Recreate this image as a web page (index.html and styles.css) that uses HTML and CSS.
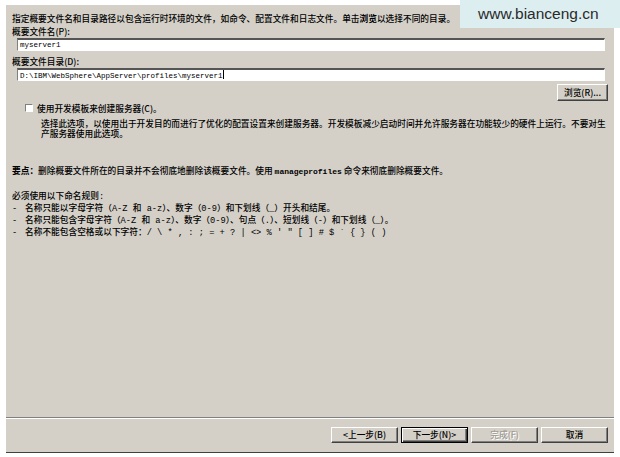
FILE: index.html
```html
<!DOCTYPE html>
<html>
<head>
  <meta charset="utf-8">
  <title>概要文件名和位置</title>
  <link rel="stylesheet" href="styles.css">
</head>
<body>
  <div class="dialog">
    <div class="content">
      <p class="intro">指定概要文件名和目录路径以包含运行时环境的文件，如命令、配置文件和日志文件。单击<b>浏览</b>以选择不同的目录。</p>

      <div class="field-label">概要文件名(P):</div>
      <div class="textbox">myserver1</div>

      <div class="field-label gap">概要文件目录(D):</div>
      <div class="textbox">D:\IBM\WebSphere\AppServer\profiles\myserver1<span class="caret"></span></div>

      <div class="browse-row">
        <button class="btn browse">浏览(R)...</button>
      </div>

      <div class="check-row">
        <span class="checkbox"></span>
        <span>使用开发模板来创建服务器(C)。</span>
      </div>
      <p class="check-desc">选择此选项，以使用出于开发目的而进行了优化的配置设置来创建服务器。开发模板减少启动时间并允许服务器在功能较少的硬件上运行。不要对生<br>产服务器使用此选项。</p>

      <p class="note"><b>要点：</b>删除概要文件所在的目录并不会彻底地删除该概要文件。使用 <code>manageprofiles</code> 命令来彻底删除概要文件。</p>

      <div class="rules">
        <p>必须使用以下命名规则:</p>
        <p><span class="dash">-</span>名称只能以字母字符（A-Z 和 a-z）、数字（0-9）和下划线（_）开头和结尾。</p>
        <p><span class="dash">-</span>名称只能包含字母字符（A-Z 和 a-z）、数字（0-9）、句点（.）、短划线（-）和下划线（_）。</p>
        <p><span class="dash">-</span>名称不能包含空格或以下字符：/ \ * , : ; = + ? | &lt;&gt; % ' " [ ] # $ ` { } ( )</p>
      </div>
    </div>

    <div class="footer">
      <button class="btn">&lt;上一步(B)</button>
      <button class="btn default">下一步(N)&gt;</button>
      <button class="btn" disabled>完成(F)</button>
      <button class="btn">取消</button>
    </div>
  </div>

  <div class="watermark">www.bianceng.cn</div>
</body>
</html>
```

FILE: styles.css
```css
* {
  box-sizing: border-box;
}

body {
  margin: 0;
  background: #ffffff;
  font-family: "Noto Sans CJK SC", "Liberation Sans", sans-serif;
  font-size: 8.7px;
  font-weight: 500;
  color: #000000;
}

p {
  margin: 0;
}

.dialog {
  display: flex;
  flex-direction: column;
  width: 608px;
  height: 448px;
  margin: 5px 0 0 6px;
  background: #d4d0c8;
  border-bottom: 1px solid #404040;
}

.content {
  flex: 1;
  padding: 7px 9px 0 6px;
}

.intro {
  line-height: 13px;
  white-space: nowrap;
}

.intro b {
  font-weight: 700;
}

.field-label {
  line-height: 13px;
}

.field-label.gap {
  margin-top: 4px;
}

.textbox {
  height: 13px;
  margin-left: 5px;
  padding: 0 2px;
  background: #ffffff;
  border-top: 2px solid #555555;
  border-left: 1px solid #808080;
  border-bottom: 1px solid #ffffff;
  border-right: 1px solid #ffffff;
  font-family: "Liberation Mono", monospace;
  font-size: 7.5px;
  font-weight: 400;
  line-height: 10px;
  white-space: nowrap;
}

.caret {
  display: inline-block;
  width: 1px;
  height: 9px;
  background: #000000;
  vertical-align: -1px;
}

.browse-row {
  display: flex;
  justify-content: flex-end;
  margin: 3px -3px 0 0;
}

.btn {
  height: 17px;
  padding: 0;
  background: #d4d0c8;
  border: 1px solid;
  border-color: #ffffff #404040 #404040 #ffffff;
  box-shadow: inset -1px -1px 0 #808080;
  font-family: "Noto Sans CJK SC", "Liberation Sans", sans-serif;
  font-size: 8.7px;
  font-weight: 500;
  line-height: 14px;
  color: #000000;
}

.btn.browse {
  width: 51px;
}

.btn.default {
  border-color: #000000;
  box-shadow: inset 1px 1px 0 #ffffff, inset -1px -1px 0 #404040, inset -2px -2px 0 #808080;
}

.btn:disabled {
  color: #a09c94;
  text-shadow: 1px 1px 0 #ffffff;
}

.check-row {
  display: flex;
  align-items: center;
  gap: 4px;
  height: 12px;
  margin: 1px 0 0 13px;
}

.checkbox {
  width: 8px;
  height: 8px;
  background: #ffffff;
  border-top: 1px solid #808080;
  border-left: 1px solid #808080;
  border-bottom: 1px solid #ffffff;
  border-right: 1px solid #ffffff;
}

.check-desc {
  margin: 5px 0 0 29px;
  line-height: 10px;
  white-space: nowrap;
}

.note {
  margin-top: 25px;
  line-height: 13px;
  white-space: nowrap;
}

.note b {
  font-weight: 700;
}

.note code {
  font-family: "Liberation Mono", monospace;
  font-size: 8px;
  font-weight: 700;
}

.rules {
  margin-top: 13px;
  font-family: "Liberation Mono", "Noto Sans CJK SC", monospace;
  line-height: 12px;
  white-space: nowrap;
}

.dash {
  display: inline-block;
  width: 13px;
}

.footer {
  display: flex;
  justify-content: flex-end;
  gap: 3px;
  height: 35px;
  padding: 9px 6px 0 0;
  border-top: 1px solid #808080;
  box-shadow: inset 0 1px 0 #ffffff;
}

.footer .btn {
  width: 67px;
  height: 16px;
}

.watermark {
  position: absolute;
  top: 0;
  right: 0;
  width: 160px;
  height: 28px;
  padding: 5px 0 0 18px;
  background: #ddeef0;
  font-family: "Liberation Sans", Arial, sans-serif;
  font-size: 15.5px;
  font-weight: 400;
  line-height: 18px;
  color: #2a2a2a;
}
```
